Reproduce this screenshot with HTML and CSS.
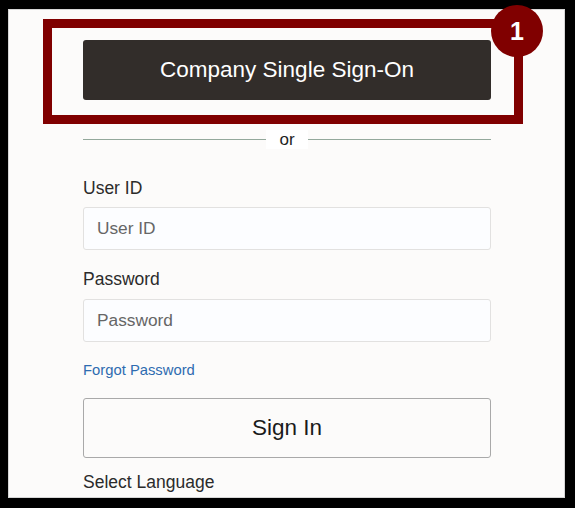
FILE: index.html
```html
<!DOCTYPE html>
<html lang="en">
<head>
    <meta charset="UTF-8">
    <meta name="viewport" content="width=device-width, initial-scale=1.0">
    <title>Sign In</title>
    <link rel="stylesheet" href="styles.css">
</head>
<body>
    <div class="panel">
        <form class="login">
            <!-- Step 1 callout round the SSO button -->
            <div class="callout">
                <button type="button" class="sso">Company Single Sign-On</button>
                <span class="badge">1</span>
            </div>

            <div class="divider"><span>or</span></div>

            <label for="userId">User ID</label>
            <input type="text" id="userId" placeholder="User ID">

            <label for="password" class="second">Password</label>
            <input type="password" id="password" placeholder="Password">

            <a href="#" class="forgot">Forgot Password</a>

            <button type="button" class="signin">Sign In</button>

            <div class="language">Select Language</div>
        </form>
    </div>
</body>
</html>
```

FILE: styles.css
```css
* {
    box-sizing: border-box;
}
html, body {
    height: 100%;
}
body {
    margin: 0;
    padding: 9px 10px 10px 8px;
    background-color: #000;
    font-family: "Liberation Sans", Arial, sans-serif;
    color: #2b2b2b;
}

.panel {
    height: 100%;
    background-color: #fcfbfa;
    border: 1px solid #d6d6d6;
}

.login {
    width: 408px;
    margin-left: 74px;
    padding-top: 30px;
    display: flex;
    flex-direction: column;
}

.callout {
    position: relative;
}
.callout::before {
    content: "";
    position: absolute;
    top: -21px;
    left: -40px;
    right: -32px;
    bottom: -24px;
    border: 9px solid #800000;
}
.badge {
    position: absolute;
    top: -35px;
    right: -52px;
    width: 52px;
    height: 52px;
    border-radius: 50%;
    background-color: #800000;
    color: #fff;
    font-weight: bold;
    font-size: 25px;
    line-height: 52px;
    text-align: center;
    z-index: 2;
}

.sso {
    display: block;
    width: 100%;
    height: 60px;
    border: none;
    border-radius: 3px;
    background-color: #322d2a;
    color: #fff;
    font-family: inherit;
    font-size: 22.5px;
}

.divider {
    margin-top: 29px;
    height: 20px;
    display: flex;
    align-items: center;
    justify-content: center;
    background: linear-gradient(#93a89b, #93a89b) center / 100% 1px no-repeat;
}
.divider span {
    background-color: #fff;
    padding: 0 13px;
    font-size: 17px;
    line-height: 19px;
    color: #1e1e1e;
}

label {
    margin-top: 29px;
    font-size: 17.5px;
    line-height: 20px;
}
label.second {
    margin-top: 19px;
}

input {
    margin-top: 9px;
    height: 43px;
    padding: 0 13px;
    border: 1px solid #e2e1e0;
    border-radius: 3px;
    background-color: #fcfdff;
    font-family: inherit;
    font-size: 17.3px;
    color: #2b2b2b;
}
input::placeholder {
    color: #666;
}
label.second + input {
    margin-top: 10px;
}

.forgot {
    margin-top: 20px;
    font-size: 14.8px;
    line-height: 17px;
    color: #2e6bb0;
    text-decoration: none;
    align-self: flex-start;
}

.signin {
    margin-top: 19px;
    height: 60px;
    border: 1px solid #a9a9a9;
    border-radius: 3px;
    background-color: #fcfbfa;
    color: #1a1a1a;
    font-family: inherit;
    font-size: 22.5px;
}

.language {
    margin-top: 14px;
    font-size: 17.5px;
    line-height: 20px;
}
```
